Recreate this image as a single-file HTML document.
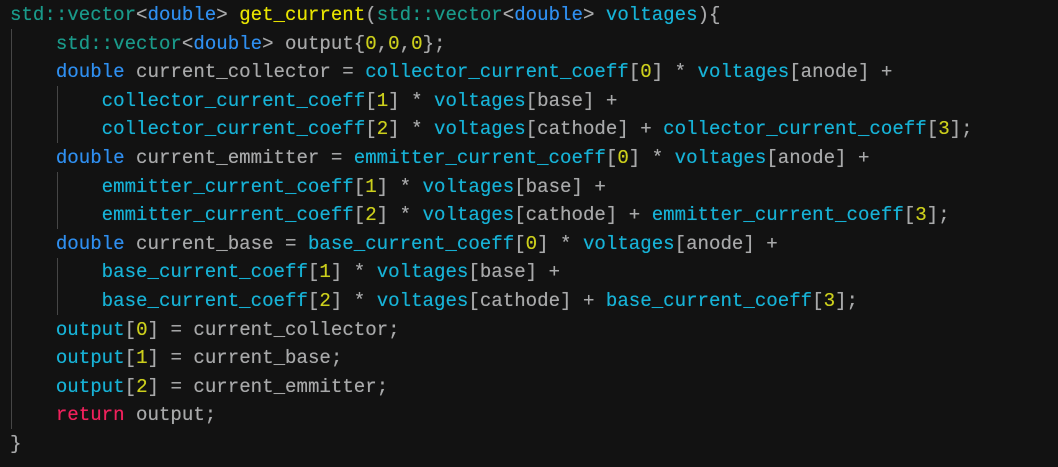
<!DOCTYPE html>
<html><head><meta charset="utf-8"><style>
html,body{margin:0;padding:0;background:#121212;width:1058px;height:467px;overflow:hidden}
pre{margin:0;position:absolute;left:10px;top:1px;font-family:"Liberation Mono",monospace;font-size:19.1px;line-height:28.6px;color:#a8a9aa;white-space:pre;text-shadow:0 0 0.4px currentColor}
.n{color:#1a9a8a}.k{color:#2f8ff0}.f{color:#e8e400}.v{color:#17b2d6}.d{color:#cccf1c}.r{color:#f0215c}
.g{position:absolute;width:1px;background:#464646}
</style></head><body>
<div class="g" style="left:11px;top:29px;height:400px"></div>
<div class="g" style="left:57px;top:86px;height:57px"></div>
<div class="g" style="left:57px;top:172px;height:57px"></div>
<div class="g" style="left:57px;top:258px;height:57px"></div>
<pre><span class="n">std::vector</span>&lt;<span class="k">double</span>&gt; <span class="f">get_current</span>(<span class="n">std::vector</span>&lt;<span class="k">double</span>&gt; <span class="v">voltages</span>){
    <span class="n">std::vector</span>&lt;<span class="k">double</span>&gt; output{<span class="d">0</span>,<span class="d">0</span>,<span class="d">0</span>};
    <span class="k">double</span> current_collector = <span class="v">collector_current_coeff</span>[<span class="d">0</span>] * <span class="v">voltages</span>[anode] +
        <span class="v">collector_current_coeff</span>[<span class="d">1</span>] * <span class="v">voltages</span>[base] +
        <span class="v">collector_current_coeff</span>[<span class="d">2</span>] * <span class="v">voltages</span>[cathode] + <span class="v">collector_current_coeff</span>[<span class="d">3</span>];
    <span class="k">double</span> current_emmitter = <span class="v">emmitter_current_coeff</span>[<span class="d">0</span>] * <span class="v">voltages</span>[anode] +
        <span class="v">emmitter_current_coeff</span>[<span class="d">1</span>] * <span class="v">voltages</span>[base] +
        <span class="v">emmitter_current_coeff</span>[<span class="d">2</span>] * <span class="v">voltages</span>[cathode] + <span class="v">emmitter_current_coeff</span>[<span class="d">3</span>];
    <span class="k">double</span> current_base = <span class="v">base_current_coeff</span>[<span class="d">0</span>] * <span class="v">voltages</span>[anode] +
        <span class="v">base_current_coeff</span>[<span class="d">1</span>] * <span class="v">voltages</span>[base] +
        <span class="v">base_current_coeff</span>[<span class="d">2</span>] * <span class="v">voltages</span>[cathode] + <span class="v">base_current_coeff</span>[<span class="d">3</span>];
    <span class="v">output</span>[<span class="d">0</span>] = current_collector;
    <span class="v">output</span>[<span class="d">1</span>] = current_base;
    <span class="v">output</span>[<span class="d">2</span>] = current_emmitter;
    <span class="r">return</span> output;
}</pre>
</body></html>
